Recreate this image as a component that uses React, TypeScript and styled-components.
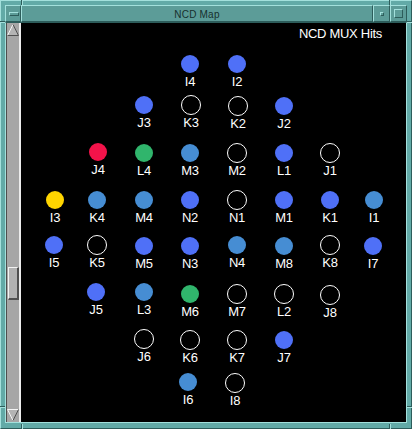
import React from "react";
import styled, { createGlobalStyle } from "styled-components";

const C = {
  frame: "#62aaa7",
  title: "#5c9c98",
  light: "#a3e0dc",
  dark: "#2d5d5b",
  text: "#17302e",
};

const DOT: Record<string, string> = {
  blue: "#4f70f7",
  light: "#468dd3",
  red: "#f3134a",
  green: "#30b56c",
  yellow: "#ffd500",
};

type Kind = "blue" | "light" | "red" | "green" | "yellow" | "empty";
type NodeData = { id: string; cx: number; cy: number; kind: Kind };

const nodes: NodeData[] = [
  { id: "I4", cx: 190, cy: 64, kind: "blue" },
  { id: "I2", cx: 237, cy: 64, kind: "blue" },
  { id: "J3", cx: 144, cy: 105, kind: "blue" },
  { id: "K3", cx: 191, cy: 105, kind: "empty" },
  { id: "K2", cx: 238, cy: 106, kind: "empty" },
  { id: "J2", cx: 284, cy: 106, kind: "blue" },
  { id: "J4", cx: 98, cy: 152, kind: "red" },
  { id: "L4", cx: 144, cy: 153, kind: "green" },
  { id: "M3", cx: 190, cy: 153, kind: "light" },
  { id: "M2", cx: 237, cy: 153, kind: "empty" },
  { id: "L1", cx: 284, cy: 153, kind: "blue" },
  { id: "J1", cx: 330, cy: 153, kind: "empty" },
  { id: "I3", cx: 55, cy: 200, kind: "yellow" },
  { id: "K4", cx: 97, cy: 200, kind: "light" },
  { id: "M4", cx: 144, cy: 200, kind: "light" },
  { id: "N2", cx: 190, cy: 200, kind: "blue" },
  { id: "N1", cx: 237, cy: 200, kind: "empty" },
  { id: "M1", cx: 284, cy: 200, kind: "blue" },
  { id: "K1", cx: 330, cy: 200, kind: "blue" },
  { id: "I1", cx: 374, cy: 200, kind: "light" },
  { id: "I5", cx: 54, cy: 245, kind: "blue" },
  { id: "K5", cx: 97, cy: 245, kind: "empty" },
  { id: "M5", cx: 144, cy: 246, kind: "blue" },
  { id: "N3", cx: 190, cy: 246, kind: "blue" },
  { id: "N4", cx: 237, cy: 245, kind: "light" },
  { id: "M8", cx: 284, cy: 246, kind: "light" },
  { id: "K8", cx: 330, cy: 245, kind: "empty" },
  { id: "I7", cx: 373, cy: 246, kind: "blue" },
  { id: "J5", cx: 96, cy: 292, kind: "blue" },
  { id: "L3", cx: 144, cy: 292, kind: "light" },
  { id: "M6", cx: 190, cy: 294, kind: "green" },
  { id: "M7", cx: 237, cy: 294, kind: "empty" },
  { id: "L2", cx: 284, cy: 294, kind: "empty" },
  { id: "J8", cx: 330, cy: 295, kind: "empty" },
  { id: "J6", cx: 144, cy: 339, kind: "empty" },
  { id: "K6", cx: 190, cy: 340, kind: "empty" },
  { id: "K7", cx: 237, cy: 340, kind: "empty" },
  { id: "J7", cx: 284, cy: 340, kind: "blue" },
  { id: "I6", cx: 188, cy: 382, kind: "light" },
  { id: "I8", cx: 235, cy: 383, kind: "empty" },
];

// canvas origin in page coordinates
const ORIGIN_X = 21;
const ORIGIN_Y = 23;

const Global = createGlobalStyle`
  html, body { margin: 0; padding: 0; background: #000; }
  body { font-family: "Liberation Sans", Arial, sans-serif; }
`;

const Window = styled.div`
  position: relative;
  box-sizing: border-box;
  width: 412px;
  height: 429px;
  background: ${C.frame};
  border: 1px solid;
  border-color: ${C.light} ${C.dark} ${C.dark} ${C.light};
  padding: 4px 4px 5px 4px;
  display: flex;
  flex-direction: column;
`;

const Tick = styled.div<{ $side: "top" | "bottom" | "left" | "right"; $at: number }>`
  position: absolute;
  box-sizing: border-box;
  ${({ $side, $at }) =>
    $side === "top" || $side === "bottom"
      ? `width: 2px; height: 5px; left: ${$at - 1}px; ${$side}: -1px;
         border-left: 1px solid ${C.dark}; border-right: 1px solid ${C.light};`
      : `height: 2px; width: 5px; top: ${$at - 1}px; ${$side}: -1px;
         border-top: 1px solid ${C.dark}; border-bottom: 1px solid ${C.light};`}
`;

const TitleBar = styled.div`
  display: flex;
  height: 17px;
  background: ${C.title};
`;

const Bevel = styled.div`
  box-sizing: border-box;
  height: 17px;
  border: 1px solid;
  border-color: ${C.light} ${C.dark} ${C.dark} ${C.light};
  display: flex;
  align-items: center;
  justify-content: center;
`;

const MenuButton = styled(Bevel)`
  width: 16px;
`;

const MenuBar = styled.div`
  box-sizing: border-box;
  width: 10px;
  height: 4px;
  margin-left: 1px;
  background: ${C.title};
  border: 1px solid;
  border-color: ${C.light} ${C.dark} ${C.dark} ${C.light};
`;

const TitleArea = styled(Bevel)`
  flex: 1;
  font-size: 10px;
  letter-spacing: 0.2px;
  color: ${C.text};
  padding-top: 1px;
`;

const SideButton = styled(Bevel)`
  width: 17px;
`;

const MinGlyph = styled.div`
  box-sizing: border-box;
  width: 4px;
  height: 4px;
  border: 1px solid;
  border-color: ${C.light} ${C.dark} ${C.dark} ${C.light};
`;

const MaxGlyph = styled.div`
  box-sizing: border-box;
  width: 9px;
  height: 9px;
  border: 1px solid;
  border-color: ${C.light} ${C.dark} ${C.dark} ${C.light};
`;

const Main = styled.div`
  flex: 1;
  display: flex;
  border: 1px solid;
  border-color: ${C.dark} ${C.light} ${C.light} ${C.light};
  min-height: 0;
`;

const ScrollBar = styled.div`
  box-sizing: border-box;
  width: 15px;
  background: #a6a6a6;
  border-left: 1px solid #4e4e4e;
  border-right: 2px solid #ececec;
  display: flex;
  flex-direction: column;
  align-items: center;
`;

const ArrowBox = styled.svg<{ $end?: boolean }>`
  display: block;
  margin: ${({ $end }) => ($end ? "0 0 1px 0" : "1px 0 0 0")};
  flex: none;
`;

const Track = styled.div`
  flex: 1;
  width: 100%;
  display: flex;
  flex-direction: column;
  align-items: center;
`;

const Thumb = styled.div<{ $offset: number }>`
  box-sizing: border-box;
  margin-top: ${({ $offset }) => $offset}px;
  width: 11px;
  height: 33px;
  background: #b2b2b2;
  border: 1px solid;
  border-color: #f2f2f2 #505050 #505050 #f2f2f2;
  border-bottom-width: 2px;
  border-right-width: 2px;
`;

const Canvas = styled.div`
  position: relative;
  flex: 1;
  background: #000;
  display: flex;
  justify-content: flex-end;
  align-items: flex-start;
  padding: 3px 24px 0 0;
`;

const Heading = styled.div`
  color: #fff;
  font-size: 13px;
  line-height: 15px;
  letter-spacing: -0.3px;
`;

const Node = styled.div`
  position: absolute;
  width: 40px;
  display: flex;
  flex-direction: column;
  align-items: center;
  gap: 1px;
`;

const DotSlot = styled.div`
  height: 20px;
  display: flex;
  align-items: center;
  justify-content: center;
`;

const Dot = styled.div<{ $kind: Kind }>`
  box-sizing: border-box;
  border-radius: 50%;
  ${({ $kind }) =>
    $kind === "empty"
      ? `width: 20px; height: 20px; border: 1px solid #fff; background: #000;`
      : `width: 18px; height: 18px; background: ${DOT[$kind]};`}
`;

const Label = styled.div`
  color: #fff;
  font-size: 13px;
  line-height: 13px;
  letter-spacing: -0.2px;
`;

const UpArrow = () => (
  <ArrowBox width="12" height="12" viewBox="0 0 12 12">
    <polygon points="6,0.5 0.5,11.5 11.5,11.5" fill="#b4b4b4" />
    <line x1="6" y1="0.5" x2="0.5" y2="11.5" stroke="#f4f4f4" strokeWidth="1" />
    <line x1="6" y1="0.5" x2="11.5" y2="11.5" stroke="#505050" strokeWidth="1" />
    <line x1="0.5" y1="11.5" x2="11.5" y2="11.5" stroke="#505050" strokeWidth="1" />
  </ArrowBox>
);

const DownArrow = () => (
  <ArrowBox $end width="12" height="12" viewBox="0 0 12 12">
    <polygon points="0.5,0.5 11.5,0.5 6,11.5" fill="#b4b4b4" />
    <line x1="0.5" y1="0.5" x2="11.5" y2="0.5" stroke="#f4f4f4" strokeWidth="1" />
    <line x1="0.5" y1="0.5" x2="6" y2="11.5" stroke="#f4f4f4" strokeWidth="1" />
    <line x1="11.5" y1="0.5" x2="6" y2="11.5" stroke="#505050" strokeWidth="1" />
  </ArrowBox>
);

export default function App() {
  return (
    <>
      <Global />
      <Window>
        <Tick $side="top" $at={21} />
        <Tick $side="top" $at={389} />
        <Tick $side="bottom" $at={21} />
        <Tick $side="bottom" $at={389} />
        <Tick $side="left" $at={21} />
        <Tick $side="left" $at={406} />
        <Tick $side="right" $at={21} />
        <Tick $side="right" $at={406} />
        <TitleBar>
          <MenuButton>
            <MenuBar />
          </MenuButton>
          <TitleArea>NCD Map</TitleArea>
          <SideButton>
            <MinGlyph />
          </SideButton>
          <SideButton>
            <MaxGlyph />
          </SideButton>
        </TitleBar>
        <Main>
          <ScrollBar>
            <UpArrow />
            <Track>
              <Thumb $offset={231} />
            </Track>
            <DownArrow />
          </ScrollBar>
          <Canvas>
            <Heading>NCD MUX Hits</Heading>
            {nodes.map((n) => (
              <Node
                key={n.id}
                style={{ left: n.cx - ORIGIN_X - 20, top: n.cy - ORIGIN_Y - 10 }}
              >
                <DotSlot>
                  <Dot $kind={n.kind} />
                </DotSlot>
                <Label>{n.id}</Label>
              </Node>
            ))}
          </Canvas>
        </Main>
      </Window>
    </>
  );
}
